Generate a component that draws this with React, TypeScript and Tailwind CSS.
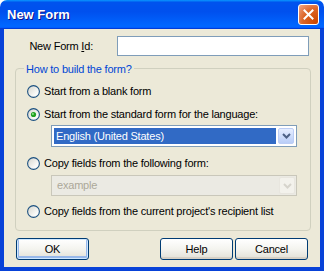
import { useId } from 'react'

// XP Luna style "New Form" dialog

function Radio({ checked = false }: { checked?: boolean }) {
  const id = useId()
  return (
    <svg width="13" height="13" viewBox="0 0 13 13" className="shrink-0">
      <defs>
        <linearGradient id={id} x1="0" y1="0" x2="1" y2="1">
          <stop offset="0" stopColor="#d4d4cc" />
          <stop offset="0.7" stopColor="#fafaf8" />
          <stop offset="1" stopColor="#ffffff" />
        </linearGradient>
      </defs>
      <circle cx="6.5" cy="6.5" r="5.9" fill={`url(#${id})`} stroke="#1c5180" strokeWidth="1.1" />
      {checked && (
        <>
          <circle cx="6.5" cy="6.5" r="2.6" fill="#21a121" />
          <circle cx="5.9" cy="5.9" r="1" fill="#8ee28e" />
        </>
      )}
    </svg>
  )
}

function RadioRow({ label, checked }: { label: string; checked?: boolean }) {
  return (
    <div className="flex items-center h-[20px] pl-[11px]">
      <Radio checked={checked} />
      <span className="ml-[4px] whitespace-nowrap">{label}</span>
    </div>
  )
}

function DropArrow({ disabled = false }: { disabled?: boolean }) {
  return (
    <div
      className={
        disabled
          ? 'w-[16px] h-full flex items-center justify-center rounded-[2px] border border-[#e8e6df] bg-[#f3f2ec]'
          : 'w-[16px] h-full flex items-center justify-center rounded-[2px] border border-[#bccdf5] bg-gradient-to-b from-[#e6eeff] to-[#b9cdf7]'
      }
    >
      <svg width="9" height="6" viewBox="0 0 9 6">
        <polyline
          points="1,1 4.5,4.5 8,1"
          fill="none"
          stroke={disabled ? '#d6d4cc' : '#4d6185'}
          strokeWidth="2"
        />
      </svg>
    </div>
  )
}

function XpButton({ label, isDefault }: { label: string; isDefault?: boolean }) {
  return (
    <button
      className={
        'w-[73px] h-[22px] rounded-[3px] border border-[#003c74] bg-gradient-to-b from-[#ffffff] via-[#f4f4ef] to-[#e2e0d6] text-black text-[11px] flex items-center justify-center ' +
        (isDefault ? 'shadow-[inset_0_0_0_1px_#cee7ff,inset_0_-1px_0_2px_#98b8ea]' : 'shadow-[inset_0_-2px_0_0_#d6d0c5]')
      }
    >
      {label}
    </button>
  )
}

export default function App() {
  return (
    <div className="w-[324px] h-[271px] flex flex-col font-['Liberation_Sans',Arial,sans-serif] text-[11px] text-black">
      {/* title bar */}
      <div className="h-[29px] shrink-0 rounded-t-[7px] bg-[linear-gradient(180deg,#0997ff,#0053ee_8%,#0050ee_40%,#06f_88%,#06f_93%,#005bff_95%,#003dd7_96%,#003dd7)] flex items-center justify-between pl-[7px] pr-[5px]">
        <span className="text-white font-bold text-[13px] [text-shadow:1px_1px_#0f1089]">New Form</span>
        <div className="w-[21px] h-[21px] rounded-[3px] border border-white bg-[radial-gradient(circle_at_90%_90%,#cc4600_0%,#dc6527_55%,#e27a48_70%,#f0a886_100%)] flex items-center justify-center">
          <svg width="11" height="11" viewBox="0 0 11 11">
            <path d="M1.5 1.5 L9.5 9.5 M9.5 1.5 L1.5 9.5" stroke="#fff" strokeWidth="2" strokeLinecap="square" />
          </svg>
        </div>
      </div>

      {/* frame + body */}
      <div className="flex-1 bg-[#0842d8] px-[4px] pb-[4px] flex">
        <div className="flex-1 bg-[#ece9d8] flex flex-col tracking-[-0.2px]">
          <div className="flex items-center mt-[7px] h-[20px]">
            <span className="w-[89px] text-right">
              New Form <span className="underline">I</span>d:
            </span>
            <div className="ml-[24px] w-[192px] h-[20px] bg-white border border-[#7f9db9]" />
          </div>

          <div className="relative ml-[11px] mt-[12px] w-[296px] h-[163px] border border-[#d0d0bf] rounded-[4px] pt-[12px]">
            <span className="absolute left-[8px] top-[-8px] px-[2px] bg-[#ece9d8] text-[#0046d5]">How to build the form?</span>
            <RadioRow label="Start from a blank form" />
            <div className="mt-[3px]">
              <RadioRow label="Start from the standard form for the language:" checked />
            </div>
            <div className="ml-[35px] mt-[1px] w-[246px] h-[22px] bg-white border border-[#7f9db9] p-[2px] flex gap-[2px]">
              <div className="flex-1 bg-[#316ac5] text-white flex items-center pl-[2px]">English (United States)</div>
              <DropArrow />
            </div>
            <div className="mt-[6px]">
              <RadioRow label="Copy fields from the following form:" />
            </div>
            <div className="ml-[35px] mt-[2px] w-[246px] h-[21px] bg-[#ebeae3] border border-[#c9c7ba] p-[1px] flex">
              <div className="flex-1 text-[#aca899] flex items-center pl-[4px]">example</div>
              <DropArrow disabled />
            </div>
            <div className="mt-[5px]">
              <RadioRow label="Copy fields from the current project's recipient list" />
            </div>
          </div>

          <div className="flex mt-[7px] ml-[12px]">
            <XpButton label="OK" isDefault />
            <div className="ml-[71px] flex gap-[2px]">
              <XpButton label="Help" />
              <XpButton label="Cancel" />
            </div>
          </div>
        </div>
      </div>
    </div>
  )
}
